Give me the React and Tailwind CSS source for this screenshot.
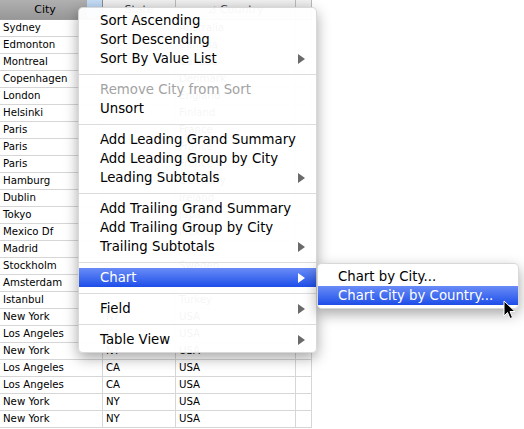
const rows = [
  ['Sydney', '', 'Australia'],
  ['Edmonton', 'AB', 'Canada'],
  ['Montreal', 'QC', 'Canada'],
  ['Copenhagen', '', 'Denmark'],
  ['London', '', 'England'],
  ['Helsinki', '', 'Finland'],
  ['Paris', '', 'France'],
  ['Paris', '', 'France'],
  ['Paris', '', 'France'],
  ['Hamburg', '', 'Germany'],
  ['Dublin', '', 'Ireland'],
  ['Tokyo', '', 'Japan'],
  ['Mexico Df', '', 'Mexico'],
  ['Madrid', '', 'Spain'],
  ['Stockholm', '', 'Sweden'],
  ['Amsterdam', '', 'The Netherlands'],
  ['Istanbul', '', 'Turkey'],
  ['New York', 'NY', 'USA'],
  ['Los Angeles', 'CA', 'USA'],
  ['New York', 'NY', 'USA'],
  ['Los Angeles', 'CA', 'USA'],
  ['Los Angeles', 'CA', 'USA'],
  ['New York', 'NY', 'USA'],
  ['New York', 'NY', 'USA'],
];

const menu = [
  { label: 'Sort Ascending' },
  { label: 'Sort Descending' },
  { label: 'Sort By Value List', sub: true },
  'sep',
  { label: 'Remove City from Sort', disabled: true },
  { label: 'Unsort' },
  'sep',
  { label: 'Add Leading Grand Summary' },
  { label: 'Add Leading Group by City' },
  { label: 'Leading Subtotals', sub: true },
  'sep',
  { label: 'Add Trailing Grand Summary' },
  { label: 'Add Trailing Group by City' },
  { label: 'Trailing Subtotals', sub: true },
  'sep',
  { label: 'Chart', sub: true, active: true },
  'sep',
  { label: 'Field', sub: true },
  'sep',
  { label: 'Table View', sub: true },
];

const Arrow = ({ white }) => (
  <svg width="7" height="10" viewBox="0 0 7 10" className="absolute right-[11px] top-[5px]">
    <path d="M0 0 L7 5 L0 10 Z" fill={white ? '#ffffff' : '#6a6a6a'} />
  </svg>
);

const MenuItem = ({ item }) => {
  if (item === 'sep') {
    return (
      <div className="h-[12px] flex items-center">
        <div className="h-px w-full bg-[#dcdcdc]" />
      </div>
    );
  }
  return (
    <div
      className={`relative h-[19px] pl-[21px] leading-[19px] ${
        item.active
          ? 'bg-gradient-to-b from-[#6a8bf6] to-[#1d4ce9] text-white'
          : item.disabled
          ? 'text-[#a3a3a3]'
          : 'text-black'
      }`}
    >
      {item.label}
      {item.sub && <Arrow white={item.active} />}
    </div>
  );
};

export default function App() {
  return (
    <div className="relative w-[524px] h-[429px] overflow-hidden bg-white font-['DejaVu_Sans',sans-serif]">
      <div className="w-[312px]">
        <div className="flex h-[20px] border-b border-[#9c9c9c] text-[11px]">
          <div className="relative w-[103px] border-r border-[#8c8c8c] bg-gradient-to-b from-[#b0b0b0] to-[#979797] text-center leading-[19px] text-black">
            <span className="pr-[12px]">City</span>
            <div className="absolute right-0 top-0 h-[18px] w-[15px] bg-gradient-to-b from-[#c6dcf5] to-[#a8c6ec]" />
          </div>
          <div className="w-[73px] border-r border-[#b8b8b8] bg-gradient-to-b from-[#f0f0f0] to-[#dadada] text-center leading-[19px] text-[#333]">
            State
          </div>
          <div className="w-[120px] border-r border-[#b8b8b8] bg-gradient-to-b from-[#f0f0f0] to-[#dadada] text-center leading-[19px] text-[#333]">
            ⊿ Country
          </div>
          <div className="w-[16px] border-r border-[#b8b8b8] bg-gradient-to-b from-[#f0f0f0] to-[#dadada]" />
        </div>
        {rows.map((r, i) => (
          <div key={i} className="flex h-[17px] border-b border-[#d6d6d6] text-[10.2px] leading-[16px] text-black">
            <div className="w-[103px] border-r border-[#d6d6d6] pl-[3px] whitespace-nowrap">{r[0]}</div>
            <div className="w-[73px] border-r border-[#d6d6d6] pl-[3px]">{r[1]}</div>
            <div className="w-[120px] border-r border-[#d6d6d6] pl-[3px] whitespace-nowrap">{r[2]}</div>
            <div className="w-[16px] border-r border-[#d6d6d6]" />
          </div>
        ))}
      </div>

      <div className="absolute left-[78px] top-[7px] w-[239px] rounded-[5px] border border-[#c8c8c8]/70 bg-white/[0.96] py-[3px] text-[13.3px] shadow-[0_5px_14px_rgba(0,0,0,0.35)] whitespace-nowrap">
        {menu.map((item, i) => (
          <MenuItem key={i} item={item} />
        ))}
      </div>

      <div className="absolute left-[317px] top-[263px] w-[202px] rounded-[5px] border border-[#c8c8c8]/70 bg-white/[0.97] py-[3px] text-[13.3px] shadow-[0_5px_14px_rgba(0,0,0,0.35)] whitespace-nowrap">
        <div className="h-[19px] pl-[20px] leading-[19px] text-black">Chart by City...</div>
        <div className="h-[19px] pl-[20px] leading-[19px] bg-gradient-to-b from-[#6a8bf6] to-[#1d4ce9] text-white">
          Chart City by Country...
        </div>
      </div>

      <svg className="absolute left-[503px] top-[300px]" width="13" height="20" viewBox="0 0 13 20">
        <path d="M1 1 L1 16 L4.5 12.5 L7 18.5 L9.5 17.5 L7 11.5 L12 11.5 Z" fill="#000" stroke="#fff" strokeWidth="1" strokeLinejoin="round" />
      </svg>
    </div>
  );
}
